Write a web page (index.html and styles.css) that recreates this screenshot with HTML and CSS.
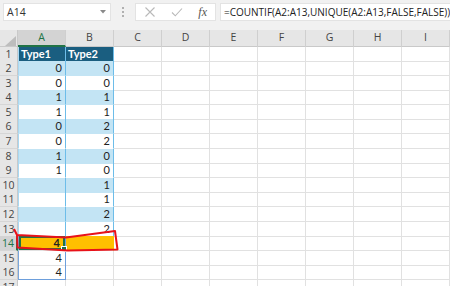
FILE: index.html
```html
<!DOCTYPE html>
<html>
  <head>
    <title>COUNTIF UNIQUE</title>
    <link rel="stylesheet" href="styles.css">
  </head>
  <body>
    <div class="bar">
      <div class="namebox">
        <span>A14</span>
        <svg class="drop" width="6" height="4" viewBox="0 0 6 4"><path d="M0 0 L6 0 L3 3.5 Z" fill="#8a8a8a"/></svg>
      </div>
      <div class="grip"><i></i><i></i><i></i></div>
      <div class="fnbox">
        <svg width="12" height="12" viewBox="0 0 12 12"><path d="M1.5 1.5 L10.5 10.5 M10.5 1.5 L1.5 10.5" stroke="#b9b9b9" stroke-width="1.1"/></svg>
        <svg width="12" height="12" viewBox="0 0 12 12"><path d="M1 6.5 L4.3 9.8 L11 2.5" stroke="#b9b9b9" stroke-width="1.1" fill="none"/></svg>
        <span class="fx">fx</span>
      </div>
      <div class="formula">=COUNTIF(A2:A13,UNIQUE(A2:A13,FALSE,FALSE))</div>
    </div>

    <div class="sheet">
      <div class="head">
        <div class="corner"><svg width="11" height="10" viewBox="0 0 11 10"><path d="M11 0 L11 10 L0 10 Z" fill="#bdbdbd"/></svg></div>
        <div class="col on">A</div>
        <div class="col">B</div>
        <div class="col">C</div>
        <div class="col">D</div>
        <div class="col">E</div>
        <div class="col">F</div>
        <div class="col">G</div>
        <div class="col">H</div>
        <div class="col">I</div>
      </div>

      <div class="row tbl hdr"><div class="rh">1</div><div class="c a">Type1</div><div class="c b">Type2</div><div class="rest"></div></div>
      <div class="row tbl band"><div class="rh">2</div><div class="c a">0</div><div class="c b">0</div><div class="rest"></div></div>
      <div class="row tbl"><div class="rh">3</div><div class="c a">0</div><div class="c b">0</div><div class="rest"></div></div>
      <div class="row tbl band"><div class="rh">4</div><div class="c a">1</div><div class="c b">1</div><div class="rest"></div></div>
      <div class="row tbl"><div class="rh">5</div><div class="c a">1</div><div class="c b">1</div><div class="rest"></div></div>
      <div class="row tbl band"><div class="rh">6</div><div class="c a">0</div><div class="c b">2</div><div class="rest"></div></div>
      <div class="row tbl"><div class="rh">7</div><div class="c a">0</div><div class="c b">2</div><div class="rest"></div></div>
      <div class="row tbl band"><div class="rh">8</div><div class="c a">1</div><div class="c b">0</div><div class="rest"></div></div>
      <div class="row tbl"><div class="rh">9</div><div class="c a">1</div><div class="c b">0</div><div class="rest"></div></div>
      <div class="row tbl band"><div class="rh">10</div><div class="c a"></div><div class="c b">1</div><div class="rest"></div></div>
      <div class="row tbl"><div class="rh">11</div><div class="c a"></div><div class="c b">1</div><div class="rest"></div></div>
      <div class="row tbl band"><div class="rh">12</div><div class="c a"></div><div class="c b">2</div><div class="rest"></div></div>
      <div class="row tbl"><div class="rh">13</div><div class="c a"></div><div class="c b">2</div><div class="rest"></div></div>
      <div class="row cur spill"><div class="rh">14</div><div class="c a active">4</div><div class="c b">&nbsp;</div><div class="rest"></div></div>
      <div class="row spill"><div class="rh">15</div><div class="c a">4</div><div class="c b"></div><div class="rest"></div></div>
      <div class="row spill last"><div class="rh">16</div><div class="c a">4</div><div class="c b"></div><div class="rest"></div></div>
      <div class="row"><div class="rh">17</div><div class="c a"></div><div class="c b"></div><div class="rest"></div></div>
    </div>

    <!-- hand drawn marker round row 14 -->
    <svg class="mark" width="450" height="286" viewBox="0 0 450 286">
      <path d="M14 229 L17 235 L66 237.5 L115 231 L117.5 249.5 L68 250.5 L17.5 247.5 L17 235" fill="none" stroke="#e8121a" stroke-width="2" stroke-linejoin="round"/>
    </svg>
  </body>
</html>
```

FILE: styles.css
```css
* { box-sizing: border-box; }
body { margin: 0; width: 450px; height: 286px; overflow: hidden; background: #fff; font-family: Lato, "Liberation Sans", sans-serif; color: #222; }

.bar { height: 30px; background: #f1f1f1; display: flex; align-items: flex-start; padding: 3px 0 0 3px; }
.namebox { width: 108px; height: 18px; background: #fff; border: 1px solid #e3e3e3; display: flex; align-items: center; justify-content: space-between; padding: 0 4px 0 3px; font-family: "Open Sans", sans-serif; font-size: 10.5px; color: #333; }
.grip { width: 24px; height: 18px; display: flex; flex-direction: column; align-items: center; justify-content: center; gap: 2px; }
.grip i { width: 2px; height: 2px; background: #9a9a9a; border-radius: 1px; }
.fnbox { width: 81px; height: 18px; background: #fff; border: 1px solid #e3e3e3; display: flex; align-items: center; justify-content: space-between; padding: 0 8px 0 8px; }
.fx { font-family: "Liberation Serif", serif; font-style: italic; font-size: 12px; color: #555; }
.formula { flex: 1; height: 18px; margin-left: 4px; background: #fff; border: 1px solid #e3e3e3; border-right: none; padding: 0 0 0 3px; font-family: "Open Sans", sans-serif; font-size: 10px; line-height: 16px; color: #222; white-space: nowrap; overflow: hidden; }

.sheet { font-size: 11px; }

.head { display: grid; grid-template-columns: 18px repeat(9, 48px); height: 16.5px; background: #e6e6e6; border-bottom: 1px solid #c9c9c9; }
.corner { border-right: 1px solid #c9c9c9; display: flex; align-items: flex-end; justify-content: flex-end; padding: 0 1px 1px 0; }
.col { border-right: 1px solid #cfcfcf; text-align: center; line-height: 15px; font-family: "Open Sans", sans-serif; font-size: 10.5px; color: #444; }
.col.on { background: #d3d3d3; color: #217346; border-bottom: 2px solid #217346; }

.row { display: grid; grid-template-columns: 18px 48px 48px 1fr; height: 14.6px; }
.rh { background: #e6e6e6; border-right: 1px solid #c9c9c9; border-bottom: 1px solid #d6d6d6; text-align: center; line-height: 14px; font-family: "Open Sans", sans-serif; font-size: 10.5px; color: #444; }
.c { border-right: 1px solid #e1e1e1; border-bottom: 1px solid #e1e1e1; text-align: right; padding: 0 3px; line-height: 14px; white-space: nowrap; }
.rest { border-bottom: 1px solid #e1e1e1; background-image: repeating-linear-gradient(to right, transparent 0 47px, #e1e1e1 47px 48px); }

.tbl .c { border-bottom-color: transparent; border-right-color: #6dbde9; }
.tbl .a { border-left: 1px solid #a9d8f2; }
.band .c { background: #c3e4f4; }
.hdr .c { background: #1a5e80; color: #fff; font-weight: bold; text-align: left; padding-left: 2px; }

.cur .rh { background: #d3d3d3; color: #217346; border-right: 2px solid #217346; }
.cur .c { background: #ffc000; border-right-color: #ffc000; }
.spill .a { border-left: 1px solid #7aa7dd; border-right-color: #6d9fdc; }
.last .a { border-bottom-color: #6d9fdc; }
.active { position: relative; font-weight: bold; padding-right: 5px; box-shadow: inset 0 0 0 2px #217346; }
.active::after { content: ""; position: absolute; right: -2px; bottom: -2px; width: 4px; height: 4px; background: #217346; border: 1px solid #fff; }

.mark { position: absolute; top: 0; left: 0; pointer-events: none; }
```
